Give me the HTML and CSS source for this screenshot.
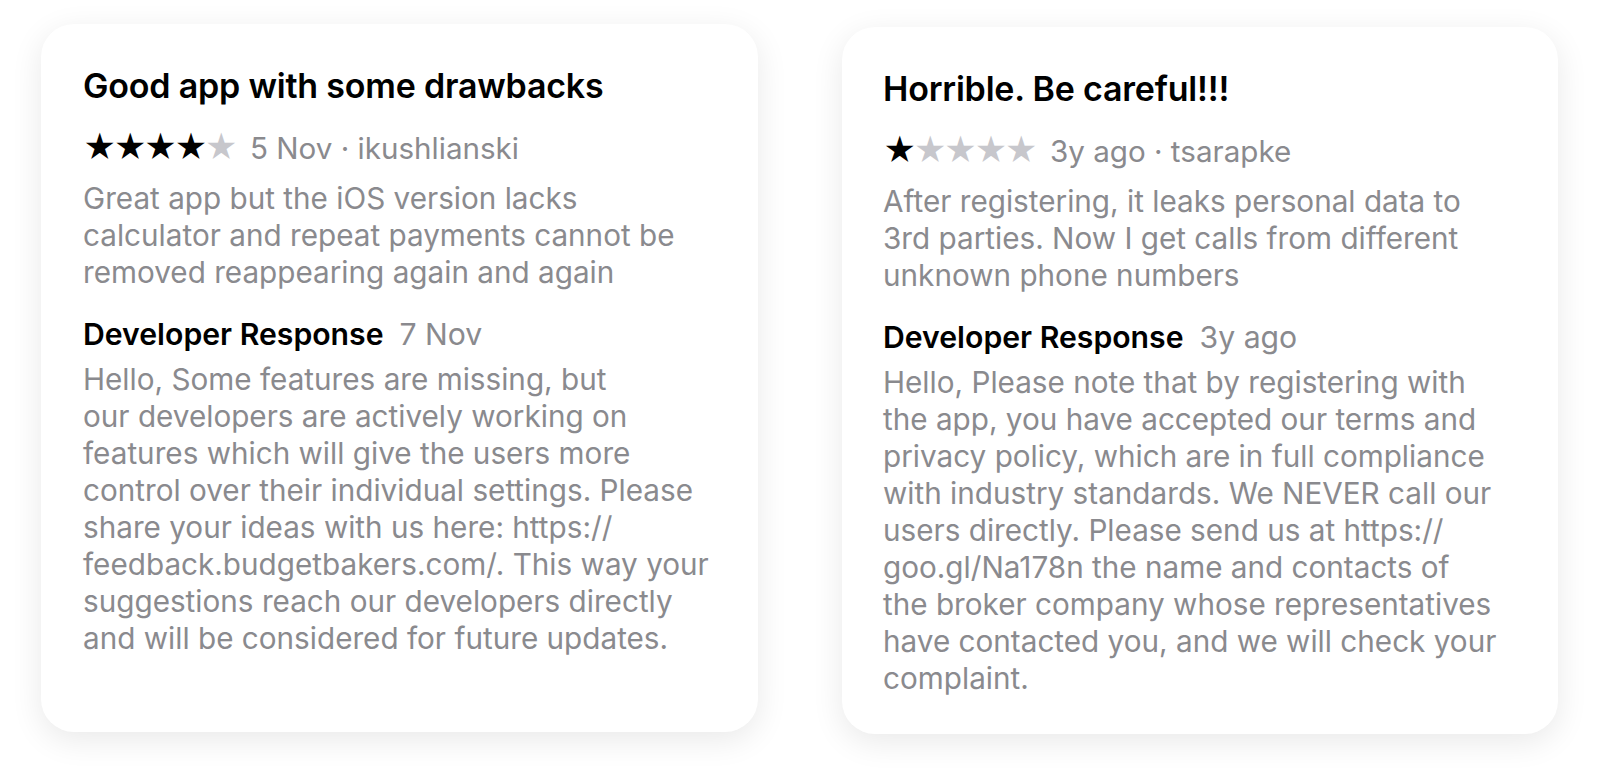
FILE: index.html
```html
<!DOCTYPE html>
<html>

<head>
    <title>Reviews</title>
    <link rel="stylesheet" href="styles.css">
</head>

<body>
    <div class="reviews">
        <div class="card">
            <h2 class="title">Good app with some drawbacks</h2>
            <div class="meta">
                <span class="stars">
                    <span class="star on">★</span><span class="star on">★</span><span class="star on">★</span><span class="star on">★</span><span class="star">★</span>
                </span>
                <span>5 Nov · ikushlianski</span>
            </div>
            <p class="text">Great app but the iOS version lacks<br>calculator and repeat payments cannot be<br>removed reappearing again and again</p>
            <div class="response-head">
                <span class="dev">Developer Response</span>
                <span class="date">7 Nov</span>
            </div>
            <p class="text">Hello, Some features are missing, but<br>our developers are actively working on<br>features which will give the users more<br>control over their individual settings. Please<br>share your ideas with us here: https://<br>feedback.budgetbakers.com/. This way your<br>suggestions reach our developers directly<br>and will be considered for future updates.</p>
        </div>
        <div class="card second">
            <h2 class="title">Horrible. Be careful!!!</h2>
            <div class="meta">
                <span class="stars">
                    <span class="star on">★</span><span class="star">★</span><span class="star">★</span><span class="star">★</span><span class="star">★</span>
                </span>
                <span>3y ago · tsarapke</span>
            </div>
            <p class="text">After registering, it leaks personal data to<br>3rd parties. Now I get calls from different<br>unknown phone numbers</p>
            <div class="response-head">
                <span class="dev">Developer Response</span>
                <span class="date">3y ago</span>
            </div>
            <p class="text">Hello, Please note that by registering with<br>the app, you have accepted our terms and<br>privacy policy, which are in full compliance<br>with industry standards. We NEVER call our<br>users directly. Please send us at https://<br>goo.gl/Na178n the name and contacts of<br>the broker company whose representatives<br>have contacted you, and we will check your<br>complaint.</p>
        </div>
    </div>
</body>

</html>
```

FILE: styles.css
```css
body {
    margin: 0;
    min-height: 100vh;
    background: white;
    font-family: Inter, "Noto Sans", sans-serif;
    color: black;
}

.reviews {
    display: flex;
    gap: 84px;
    padding: 24px 41px 0 41px;
    align-items: flex-start;
}

.card {
    flex-shrink: 0;
    width: 717px;
    height: 708px;
    box-sizing: border-box;
    padding: 42px 42px 0 42px;
    background: white;
    border-radius: 33px;
    box-shadow: 0 8px 32px rgba(0, 0, 0, 0.09);
}

.card.second {
    margin-top: 3px;
    width: 716px;
    height: 707px;
    padding-left: 41px;
}

.title {
    margin: 0;
    font-size: 34px;
    font-weight: 600;
    line-height: 40px;
    letter-spacing: -0.2px;
}

.meta {
    display: flex;
    align-items: center;
    margin-top: 24px;
    font-size: 29.6px;
    line-height: 36px;
    color: #8a8a8e;
}

.stars {
    display: flex;
    margin-right: 15px;
}

.star {
    width: 30.4px;
    font-size: 32px;
    color: #c7c7cc;
}

.star.on {
    color: black;
}

.text {
    margin: 14px 0 0 0;
    font-size: 29.7px;
    line-height: 37px;
    color: #8a8a8e;
}

.response-head {
    display: flex;
    align-items: baseline;
    gap: 16px;
    margin-top: 25px;
    font-size: 30.2px;
    line-height: 37px;
}

.dev {
    font-weight: 600;
}

.date {
    color: #8a8a8e;
}

.response-head + .text {
    margin-top: 8px;
}
```
